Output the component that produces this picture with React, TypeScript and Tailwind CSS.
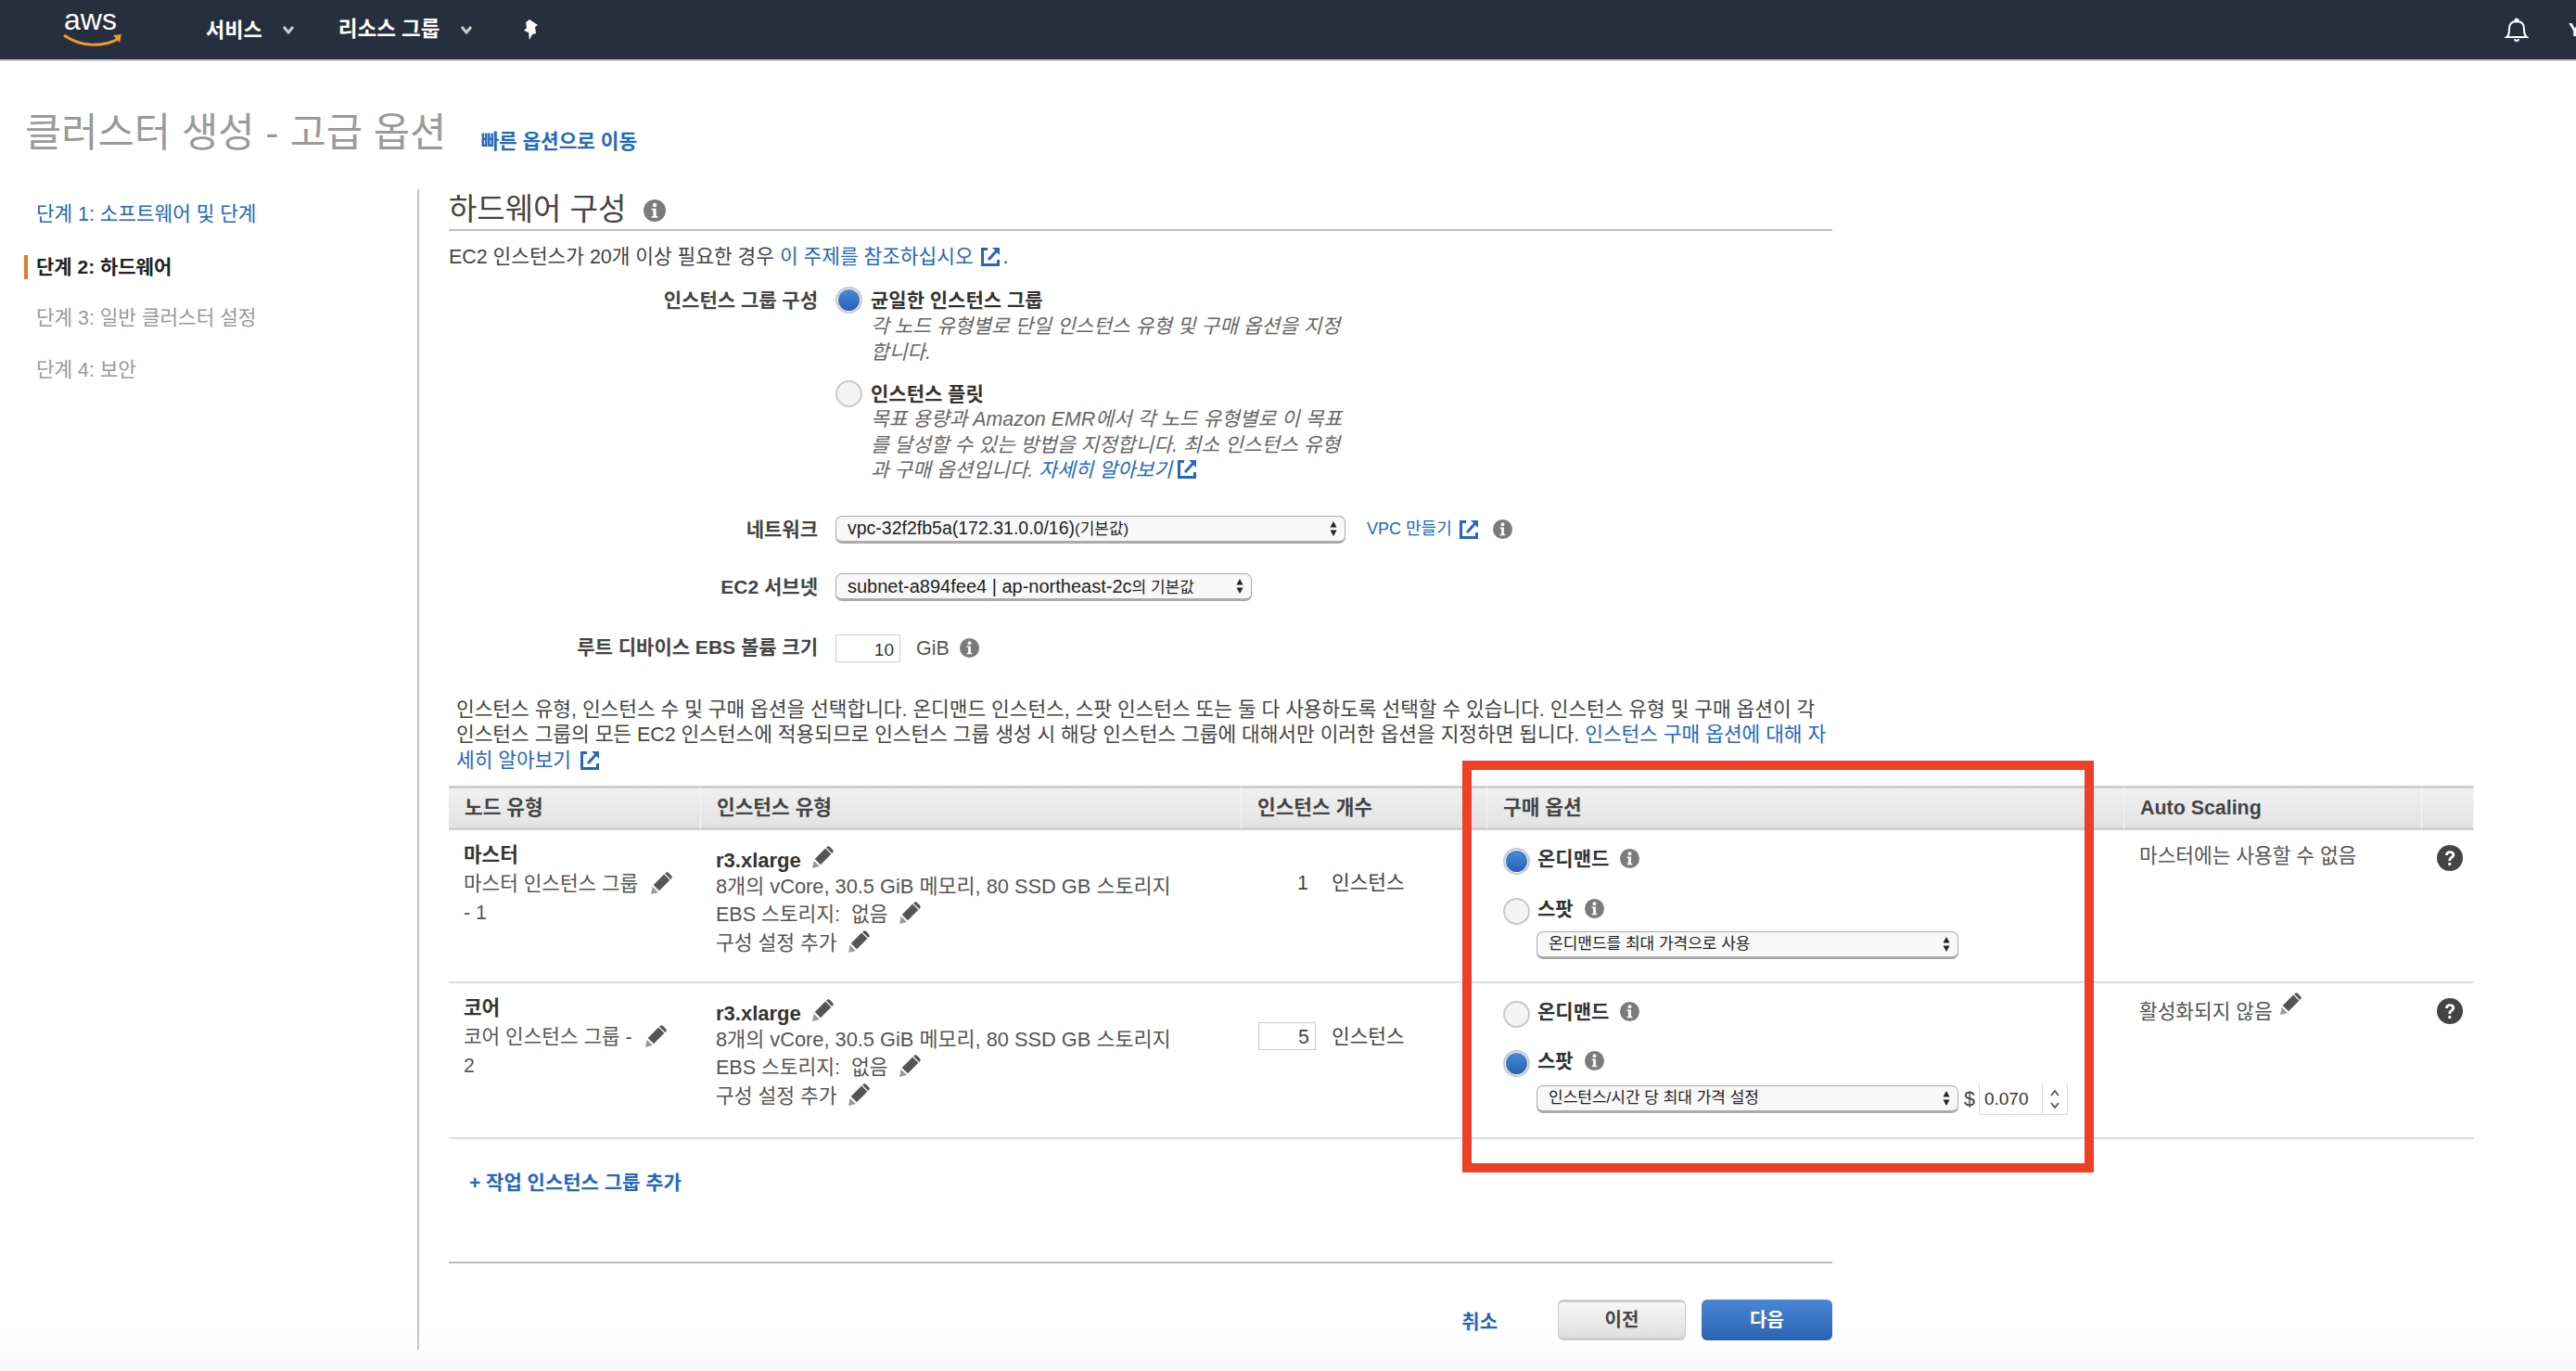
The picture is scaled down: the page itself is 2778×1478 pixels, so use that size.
import type { ReactNode } from "react";

const FONT = "font-['Liberation_Sans','Noto_Sans_CJK_KR',sans-serif]";

function InfoIcon({ className = "" }: { className?: string }) {
  return (
    <svg viewBox="0 0 22 22" className={`w-[21px] h-[21px] shrink-0 ${className}`}>
      <circle cx="11" cy="11" r="11" fill="#7b7b7b" />
      <circle cx="11" cy="5.5" r="2" fill="#fff" />
      <path d="M8 9h4.5v7.5H14V18H8v-1.5h1.5V10.5H8z" fill="#fff" />
    </svg>
  );
}

function HelpIcon() {
  return (
    <svg viewBox="0 0 28 28" className="w-[28px] h-[28px]">
      <circle cx="14" cy="14" r="14" fill="#444" />
      <path
        d="M9 11c0-3 2.200-4.800 5.200-4.800 3 0 5 1.700 5 4.200 0 3.600-4 3.400-4 6.600h-2.900c0-4.400 3.900-4.300 3.900-6.500 0-1-.8-1.700-2-1.700-1.300 0-2.100.8-2.200 2.200z"
        fill="#fff"
      />
      <rect x="12.300" y="19" width="2.900" height="3" fill="#fff" />
    </svg>
  );
}

function Pencil({ className = "" }: { className?: string }) {
  return (
    <svg viewBox="0 0 24 24" className={`w-[25px] h-[25px] shrink-0 ${className}`}>
      <path d="M2 23l1.500-8 6 6z" fill="#999" />
      <path d="M4.500 13.500L15.500 2.500l6 6L10.500 19.500z" fill="#555" />
      <path d="M17 1c1-1 2.200-1 3.200 0l2.800 2.800c1 1 1 2.200 0 3.200l-.6.600-6-6z" fill="#555" />
    </svg>
  );
}

function ExternalIcon({ className = "" }: { className?: string }) {
  return (
    <svg viewBox="0 0 24 24" className={`w-[24px] h-[24px] shrink-0 ${className}`} fill="none" stroke="#2567bb">
      <path d="M9 3.500H3.500v17h17V15" strokeWidth="3" />
      <path d="M10 15L20 4" strokeWidth="3" />
      <path d="M14 2h8v8z" fill="#2567bb" stroke="none" />
    </svg>
  );
}

function Radio({ checked = false }: { checked?: boolean }) {
  return (
    <span className="w-[29px] h-[29px] rounded-full border-2 border-[#c9c9c9] bg-[#f4f4f4] flex items-center justify-center shrink-0">
      {checked && (
        <span className="w-[23px] h-[23px] rounded-full bg-gradient-to-b from-[#4c8ad8] to-[#2463b4]" />
      )}
    </span>
  );
}

function SelectBox({ width, children }: { width: string; children: ReactNode }) {
  return (
    <div
      className={`${width} h-[30px] rounded-[7px] border border-[#aaa] border-b-[3px] bg-[#f8f8f8] flex items-center justify-between pl-[12px] pr-[8px] text-[17px] text-[#222]`}
    >
      <span className="whitespace-nowrap">{children}</span>
      <svg viewBox="0 0 8 16" className="w-[8px] h-[16px]">
        <path d="M4 0l3.500 6.500h-7zM4 16L.5 9.500h7z" fill="#222" />
      </svg>
    </div>
  );
}

function FormRow({ label, className, children }: { label: string; className: string; children: ReactNode }) {
  return (
    <div className={`grid grid-cols-[398px_1fr] gap-x-[19px] ${className}`}>
      <div className="text-right font-bold text-[#444] text-[21px] leading-[30px]">{label}</div>
      <div className="flex items-center">{children}</div>
    </div>
  );
}

function InstanceDetails() {
  return (
    <div className="pl-[16px] text-[#555] text-[21.500px]">
      <div className="flex items-center gap-[10px] font-bold text-[#333] h-[28px] text-[22px]">
        r3.xlarge <Pencil className="-mt-[6px]" />
      </div>
      <div className="whitespace-nowrap leading-[29px] text-[21.800px]">8개의 vCore, 30.5 GiB 메모리, 80 SSD GB 스토리지</div>
      <div className="flex items-center gap-[10px] h-[32px]">
        EBS 스토리지:&nbsp; 없음 <Pencil className="-mt-[4px]" />
      </div>
      <div className="flex items-center gap-[10px] h-[31px]">
        구성 설정 추가 <Pencil className="-mt-[4px]" />
      </div>
    </div>
  );
}

function NodeCell({ title, line1, line2 }: { title: string; line1: string; line2: string }) {
  return (
    <div className="pl-[16px] pt-[12px] text-[21.300px] leading-[31px] text-[#555]">
      <div className="font-bold text-[#333]">{title}</div>
      <div className="flex items-center gap-[12px] whitespace-nowrap">
        {line1} <Pencil className="-mt-[2px]" />
      </div>
      <div>{line2}</div>
    </div>
  );
}

function PurchaseOption({ label, checked, gap }: { label: string; checked?: boolean; gap: string }) {
  return (
    <div className={`flex items-center gap-[8px] ${gap}`}>
      <Radio checked={checked} />
      <span className="font-bold text-[#333] text-[21px] -mt-[6px]">{label}</span>
      <InfoIcon className="ml-[4px] -mt-[6px]" />
    </div>
  );
}

const headers = ["노드 유형", "인스턴스 유형", "인스턴스 개수", "구매 옵션", "Auto Scaling", ""];

export default function App() {
  return (
    <div
      className={`${FONT} relative w-[2778px] h-[1478px] overflow-hidden bg-[linear-gradient(to_bottom,#fff_97%,#f8f8f8_100%)] text-[21.400px]`}
    >
      {/* top nav */}
      <header className="h-[66px] bg-[#252f3e] border-b-2 border-[#cfcfcf] flex items-center text-white relative">
        <svg viewBox="0 0 64 42" className="w-[64px] h-[42px] ml-[69px] overflow-visible">
          <text x="0" y="21" fontSize="32" fill="#fff" fontFamily="Liberation Sans">
            aws
          </text>
          <path d="M0 27c17 12 42 14 60 3" fill="none" stroke="#f29a2e" strokeWidth="3" />
          <path d="M53 27l9-1-2 9z" fill="#f29a2e" />
        </svg>
        <span className="ml-[89px] font-bold text-[22px]">서비스</span>
        <svg viewBox="0 0 14 10" className="w-[14px] h-[10px] ml-[21px]" fill="none" stroke="#ccc" strokeWidth="3">
          <path d="M2 2l5 6 5-6" />
        </svg>
        <span className="ml-[47px] font-bold text-[22.500px]">리소스 그룹</span>
        <svg viewBox="0 0 14 10" className="w-[14px] h-[10px] ml-[21px]" fill="none" stroke="#ccc" strokeWidth="3">
          <path d="M2 2l5 6 5-6" />
        </svg>
        <svg viewBox="0 0 24 24" className="w-[24px] h-[24px] ml-[52px]" fill="#fff">
          <path d="M9 1l9 6-3 2 1 7-4 1-3 6-1-8-5-2 3-3-1-6z" />
        </svg>
        <div className="ml-auto flex items-center">
          <svg viewBox="0 0 26 26" className="w-[26px] h-[26px]" fill="none" stroke="#fff" strokeWidth="2">
            <path d="M2 21c3-2 3-5 3-9 0-5 3-8 8-8s8 3 8 8c0 4 0 7 3 9z" />
            <circle cx="13" cy="3" r="1.500" />
            <path d="M11 23a2 2 0 0 0 4 0" />
          </svg>
          <span className="ml-[43px] -mr-[6px] font-bold text-[20px] w-[14px] overflow-hidden">Y</span>
        </div>
      </header>

      {/* title */}
      <div className="h-[138px] pl-[27px] pt-[51px] flex items-start">
        <h1 className="text-[42.700px] leading-[52px] text-[#9a9a9a] whitespace-nowrap">클러스터 생성 - 고급 옵션</h1>
        <a className="ml-[37px] mt-[21px] font-bold text-[#2567bb] text-[21.300px] whitespace-nowrap">빠른 옵션으로 이동</a>
      </div>

      <div className="flex items-start">
        {/* steps */}
        <nav className="w-[452px] h-[1251px] border-r-2 border-[#c4c4c4] text-[21.300px]">
          <div className="h-[56px] pl-[39px] flex items-center text-[#2567bb]">단계 1: 소프트웨어 및 단계</div>
          <div className="h-[56px] flex items-center font-bold text-[#222] text-[21px]">
            <span className="w-[4px] h-[26px] bg-[#d9822b] ml-[26px] mr-[9px]" />
            단계 2: 하드웨어
          </div>
          <div className="h-[56px] pl-[39px] flex items-center text-[#999]">단계 3: 일반 클러스터 설정</div>
          <div className="h-[56px] pl-[39px] flex items-center text-[#999]">단계 4: 보안</div>
        </nav>

        <main className="pl-[32px] flex-1 min-w-0">
          <div className="w-[1492px]">
            <h2 className="flex items-center gap-[19px] h-[45px] border-b-2 border-[#bbb] text-[33px] text-[#444]">
              하드웨어 구성 <InfoIcon className="w-[24px] h-[24px] mt-[3px]" />
            </h2>
            <p className="mt-[13px] leading-[30px] text-[#444] flex items-center whitespace-nowrap">
              EC2 인스턴스가 20개 이상 필요한 경우&nbsp;
              <a className="text-[#2567bb]">이 주제를 참조하십시오</a>
              <ExternalIcon className="ml-[6px] mr-[2px]" />.
            </p>

            <FormRow label="인스턴스 그룹 구성" className="mt-[17px]">
              <div className="flex flex-col">
                <div className="flex gap-[9px] items-start">
                  <Radio checked />
                  <div className="w-[510px]">
                    <div className="font-bold text-[#333] leading-[29px] text-[21px]">균일한 인스턴스 그룹</div>
                    <div className="italic text-[#666] leading-[28px]">
                      각 노드 유형별로 단일 인스턴스 유형 및 구매 옵션을 지정합니다.
                    </div>
                  </div>
                </div>
                <div className="flex gap-[9px] items-start mt-[16px]">
                  <Radio />
                  <div className="w-[510px]">
                    <div className="font-bold text-[#333] leading-[29px] text-[21px]">인스턴스 플릿</div>
                    <div className="italic text-[#666] leading-[27.500px]">
                      목표 용량과 Amazon EMR에서 각 노드 유형별로 이 목표를 달성할 수 있는 방법을 지정합니다. 최소 인스턴스 유형과 구매 옵션입니다.{" "}
                      <a className="text-[#2567bb]">자세히 알아보기</a>
                      <ExternalIcon className="inline-block ml-[4px] -mt-[4px]" />
                    </div>
                  </div>
                </div>
              </div>
            </FormRow>

            <FormRow label="네트워크" className="mt-[34px]">
              <SelectBox width="w-[550px]">
                <span className="text-[19.500px]">vpc-32f2fb5a(172.31.0.0/16)</span>(기본값)
              </SelectBox>
              <a className="ml-[23px] text-[#2567bb] text-[18px]">VPC 만들기</a>
              <ExternalIcon className="ml-[6px] w-[22px] h-[22px]" />
              <InfoIcon className="ml-[14px]" />
            </FormRow>

            <FormRow label="EC2 서브넷" className="mt-[32px]">
              <SelectBox width="w-[449px]">
                <span className="text-[20px]">subnet-a894fee4 | ap-northeast-2c</span>의 기본값
              </SelectBox>
            </FormRow>

            <FormRow label="루트 디바이스 EBS 볼륨 크기" className="mt-[35px]">
              <div className="w-[70px] h-[30px] border border-[#ccc] text-right pr-[6px] text-[#333] leading-[32px] text-[19px]">10</div>
              <span className="ml-[17px] text-[#555]">GiB</span>
              <InfoIcon className="ml-[11px]" />
            </FormRow>

            <p className="mt-[37px] ml-[8px] text-[#444] text-[21.400px] leading-[27.800px]">
              인스턴스 유형, 인스턴스 수 및 구매 옵션을 선택합니다. 온디맨드 인스턴스, 스팟 인스턴스 또는 둘 다 사용하도록 선택할 수 있습니다. 인스턴스 유형 및 구매 옵션이 각 인스턴스 그룹의 모든 EC2 인스턴스에 적용되므로 인스턴스 그룹 생성 시 해당 인스턴스 그룹에 대해서만 이러한 옵션을 지정하면 됩니다.{" "}
              <a className="text-[#2567bb]">인스턴스 구매 옵션에 대해 자세히 알아보기</a>
              <ExternalIcon className="inline-block ml-[8px] -mt-[4px]" />
            </p>
          </div>

          {/* instance table */}
          <div className="mt-[12px] w-[2184px] grid grid-cols-[272px_583px_265px_687px_321px_56px]">
            {headers.map(h => (
              <div
                key={h || "blank"}
                className="h-[48px] border-t-[3px] border-b-[3px] border-[#cfcfcf] border-r border-r-[#f5f5f5] bg-gradient-to-b from-[#f0f0f0] to-[#e3e3e3] pl-[17px] flex items-center font-bold text-[#444] whitespace-nowrap"
              >
                {h}
              </div>
            ))}

            {/* master row */}
            <div className="contents">
              <div className="h-[165px] border-b-2 border-[#ddd]">
                <NodeCell title="마스터" line1="마스터 인스턴스 그룹" line2="- 1" />
              </div>
              <div className="h-[165px] border-b-2 border-[#ddd] pt-[18px]">
                <InstanceDetails />
              </div>
              <div className="h-[165px] border-b-2 border-[#ddd] pt-[41px] pl-[18px] flex items-start gap-[17px] text-[#444]">
                <span className="w-[62px] text-right pr-[8px]">1</span>
                <span>인스턴스</span>
              </div>
              <div className="h-[165px] border-b-2 border-[#ddd] pl-[17px] pt-[19px]">
                <PurchaseOption label="온디맨드" checked gap="" />
                <PurchaseOption label="스팟" gap="mt-[25px]" />
                <div className="ml-[36px] mt-[7px]">
                  <SelectBox width="w-[455px]">온디맨드를 최대 가격으로 사용</SelectBox>
                </div>
              </div>
              <div className="h-[165px] border-b-2 border-[#ddd] pl-[16px] pt-[12px] text-[#555]">마스터에는 사용할 수 없음</div>
              <div className="h-[165px] border-b-2 border-[#ddd] pl-[16px] pt-[16px]">
                <HelpIcon />
              </div>
            </div>

            {/* core row */}
            <div className="contents">
              <div className="h-[168px] border-b-2 border-[#ddd]">
                <NodeCell title="코어" line1="코어 인스턴스 그룹 -" line2="2" />
              </div>
              <div className="h-[168px] border-b-2 border-[#ddd] pt-[18px]">
                <InstanceDetails />
              </div>
              <div className="h-[168px] border-b-2 border-[#ddd] pt-[42px] pl-[18px] flex items-start gap-[17px] text-[#444]">
                <span className="w-[62px] h-[30px] border border-[#ccc] text-right pr-[6px] leading-[30px]">5</span>
                <span>인스턴스</span>
              </div>
              <div className="h-[168px] border-b-2 border-[#ddd] pl-[17px] pt-[19px]">
                <PurchaseOption label="온디맨드" gap="" />
                <PurchaseOption label="스팟" checked gap="mt-[24px]" />
                <div className="ml-[36px] mt-[7px] flex items-center">
                  <SelectBox width="w-[455px]">인스턴스/시간 당 최대 가격 설정</SelectBox>
                  <span className="ml-[6px] text-[#444]">$</span>
                  <div className="ml-[4px] w-[96px] h-[34px] border border-[#ddd] border-t-0 flex text-[#333] text-[19px]">
                    <span className="flex-1 pl-[5px] leading-[34px]">0.070</span>
                    <span className="w-[27px] border-l border-[#ddd] flex items-center justify-center">
                      <svg viewBox="0 0 12 24" className="w-[12px] h-[24px]" fill="none" stroke="#444" strokeWidth="1.500">
                        <path d="M2 8l4-5 4 5M2 16l4 5 4-5" />
                      </svg>
                    </span>
                  </div>
                </div>
              </div>
              <div className="h-[168px] border-b-2 border-[#ddd] pl-[16px] pt-[15px] text-[#555] flex items-start gap-[6px]">
                활성화되지 않음 <Pencil className="-mt-[5px]" />
              </div>
              <div className="h-[168px] border-b-2 border-[#ddd] pl-[16px] pt-[16px]">
                <HelpIcon />
              </div>
            </div>
          </div>

          <div className="w-[1492px]">
            <a className="block mt-[33px] ml-[22px] font-bold text-[#2567bb] leading-[28px] text-[21px]">+ 작업 인스턴스 그룹 추가</a>
            <div className="mt-[71px] border-t-2 border-[#bbb]" />
            <div className="mt-[39px] flex items-center justify-end">
              <a className="font-bold text-[#2567bb] mr-[65px] mt-[3px] text-[21px]">취소</a>
              <button className="w-[138px] h-[44px] rounded-[6px] border border-[#ccc] border-t-[3px] border-b-[3px] bg-gradient-to-b from-[#f7f7f7] to-[#dfdfdf] font-bold text-[#444] text-[20px]">
                이전
              </button>
              <button className="ml-[17px] w-[141px] h-[44px] rounded-[6px] bg-gradient-to-b from-[#4a86d6] to-[#2a64b0] font-bold text-white text-[20px]">
                다음
              </button>
            </div>
          </div>
        </main>
      </div>

      {/* red annotation box from the original screenshot */}
      <div className="absolute left-[1577px] top-[820px] w-[681px] h-[444px] border-[10px] border-[#ee4027]" />
    </div>
  );
}
